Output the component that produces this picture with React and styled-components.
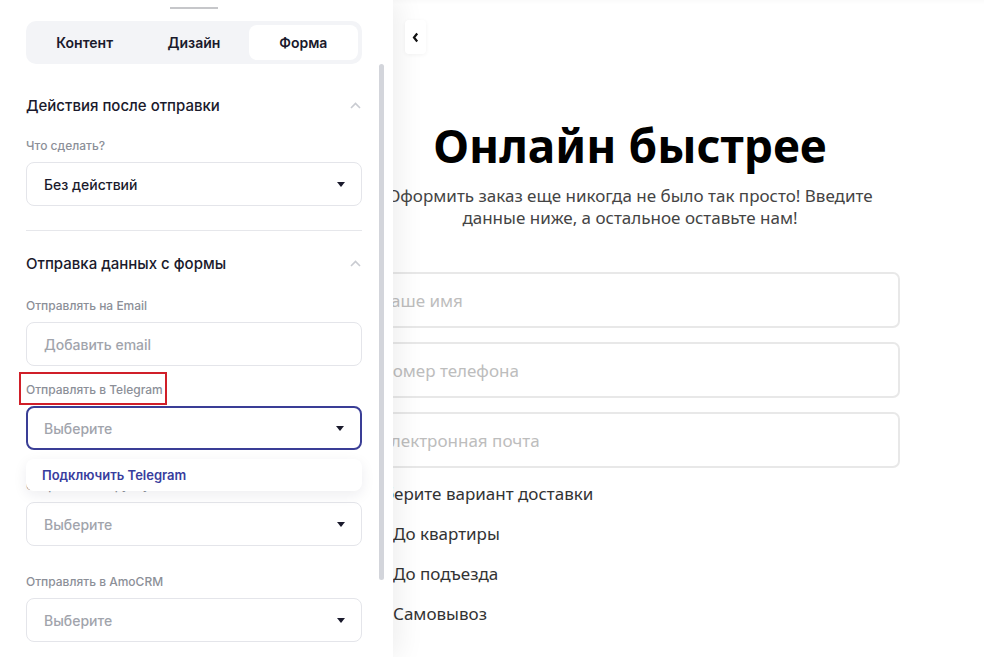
import React from 'react';
import styled, { createGlobalStyle } from 'styled-components';

const GlobalStyle = createGlobalStyle`
  html, body {
    height: 100%;
    margin: 0;
    background: #ffffff;
  }
  * {
    box-sizing: border-box;
  }
`;

const Page = styled.div`
  display: flex;
  height: 100vh;
  overflow: hidden;
`;

// ---------- left settings panel ----------

const Panel = styled.aside`
  position: relative;
  z-index: 2;
  flex-shrink: 0;
  width: 393px;
  display: flex;
  gap: 17px;
  padding: 0 9px 0 26px;
  background: #ffffff;
  box-shadow: 6px 0 26px rgba(0, 0, 0, 0.07);
  font-family: Inter, "Noto Sans", sans-serif;
  color: #1c1c2e;
`;

const PanelBody = styled.div`
  width: 336px;
  display: flex;
  flex-direction: column;
`;

const Scrollbar = styled.div`
  width: 5px;
  height: 516px;
  margin-top: 64px;
  border-radius: 3px;
  background: #d3d5db;
`;

const Handle = styled.div`
  align-self: center;
  width: 48px;
  height: 2px;
  margin-top: 7px;
  background: #c6c7ca;
`;

const Tabs = styled.div`
  display: grid;
  grid-template-columns: repeat(3, 1fr);
  margin-top: 12px;
  padding: 4px;
  height: 43px;
  border-radius: 10px;
  background: #f3f4f7;
`;

const Tab = styled.div`
  display: flex;
  align-items: center;
  justify-content: center;
  border-radius: 8px;
  font-size: 14px;
  font-weight: 600;
  color: #1a1a2c;
  background: ${({ active }) => (active ? '#ffffff' : 'transparent')};
`;

const SectionHeader = styled.div`
  display: flex;
  align-items: center;
  justify-content: space-between;
  height: 20px;
  margin-top: ${({ gap }) => gap}px;
  font-size: 15px;
  font-weight: 500;
  color: #1a1a2c;
`;

const Divider = styled.div`
  height: 1px;
  margin-top: 24px;
  background: #e6e7eb;
`;

const Field = styled.div`
  position: relative;
  display: flex;
  flex-direction: column;
  margin-top: ${({ gap }) => gap}px;
`;

const Label = styled.span`
  position: relative;
  align-self: flex-start;
  font-size: 12px;
  line-height: 16px;
  font-weight: 500;
  color: #8c8f98;
  margin-bottom: 8px;

  ${({ marked }) =>
    marked &&
    `
    &::after {
      content: '';
      position: absolute;
      top: -10px;
      bottom: -7px;
      left: -7px;
      right: -4px;
      border: 2px solid #d01f29;
    }
  `}
`;

const SelectBox = styled.div`
  display: flex;
  align-items: center;
  justify-content: space-between;
  height: 44px;
  padding: 0 16px 0 ${({ focused }) => (focused ? 16 : 17)}px;
  border-radius: 8px;
  border: ${({ focused }) => (focused ? '2px solid #3a3e96' : '1px solid #e4e5ea')};
  background: #ffffff;
  font-size: 14px;
  font-weight: 500;
  color: ${({ empty }) => (empty ? '#a1a4ac' : '#1a1a2c')};
`;

const Menu = styled.div`
  position: absolute;
  top: calc(100% + 9px);
  left: 0;
  right: 0;
  z-index: 3;
  height: 32px;
  display: flex;
  align-items: center;
  padding-left: 16px;
  border-radius: 8px;
  background: #ffffff;
  box-shadow: 0 4px 14px rgba(30, 30, 60, 0.08);
  font-size: 13px;
  font-weight: 600;
  color: #383d9e;
`;

const Caret = () => (
  <svg width="8" height="5" viewBox="0 0 8 5">
    <path d="M0 0h8L4 5z" fill="#1a1a2c" />
  </svg>
);

const ChevronUp = () => (
  <svg width="11" height="7" viewBox="0 0 11 7" style={{ marginRight: 1 }}>
    <path d="M1 6l4.5-4.5L10 6" stroke="#c9cbd1" strokeWidth="1.6" fill="none" />
  </svg>
);

// ---------- preview ----------

const Preview = styled.main`
  position: relative;
  flex: 1;
  display: flex;
  flex-direction: column;
  padding: 20px 0 0 12px;
  font-family: "Noto Sans", "Open Sans", sans-serif;
  box-shadow: inset 0 6px 6px -6px rgba(0, 0, 0, 0.04);
`;

const BackButton = styled.button`
  position: relative;
  z-index: 3;
  width: 21px;
  height: 34px;
  padding: 0;
  display: flex;
  align-items: center;
  justify-content: center;
  border: none;
  border-radius: 4px;
  background: #ffffff;
  box-shadow: 0 1px 4px rgba(0, 0, 0, 0.05);
`;

const Content = styled.div`
  width: 540px;
  margin: 62px 0 0 -45px;
  display: flex;
  flex-direction: column;
`;

const Title = styled.h1`
  margin: 0;
  text-align: center;
  font-size: 46px;
  line-height: 58px;
  font-weight: 700;
  color: #000000;
`;

const Subtitle = styled.p`
  margin: 11px 0 0;
  text-align: center;
  font-size: 17px;
  line-height: 22px;
  color: #444444;
`;

const Inputs = styled.div`
  display: flex;
  flex-direction: column;
  gap: 14px;
  margin-top: 43px;
`;

const TextInput = styled.div`
  height: 56px;
  display: flex;
  align-items: center;
  padding-left: 18px;
  border: 2px solid #e8e8e8;
  border-radius: 7px;
  font-size: 17px;
  color: #bdbdbd;
`;

const RadioGroup = styled.div`
  display: flex;
  flex-direction: column;
  gap: 16px;
  margin-top: 14px;
  font-size: 17px;
  line-height: 24px;
  color: #333333;
`;

const Option = styled.label`
  display: flex;
  align-items: center;
  gap: 13px;
`;

const Radio = styled.span`
  width: 20px;
  height: 20px;
  border-radius: 50%;
  border: 2px solid #cccccc;
`;

const App = () => {
  return (
    <>
      <GlobalStyle />
      <Page>
        <Panel>
          <PanelBody>
            <Handle />
            <Tabs>
              <Tab>Контент</Tab>
              <Tab>Дизайн</Tab>
              <Tab active>Форма</Tab>
            </Tabs>

            <SectionHeader gap={31}>
              Действия после отправки
              <ChevronUp />
            </SectionHeader>
            <Field gap={23}>
              <Label>Что сделать?</Label>
              <SelectBox>
                Без действий
                <Caret />
              </SelectBox>
            </Field>

            <Divider />

            <SectionHeader gap={22}>
              Отправка данных с формы
              <ChevronUp />
            </SectionHeader>
            <Field gap={25}>
              <Label>Отправлять на Email</Label>
              <SelectBox empty>Добавить email</SelectBox>
            </Field>
            <Field gap={16}>
              <Label marked>Отправлять в Telegram</Label>
              <SelectBox focused empty>
                Выберите
                <Caret />
              </SelectBox>
              <Menu>Подключить Telegram</Menu>
            </Field>
            <Field gap={28}>
              <Label>Отправлять в группу</Label>
              <SelectBox empty>
                Выберите
                <Caret />
              </SelectBox>
            </Field>
            <Field gap={28}>
              <Label>Отправлять в AmoCRM</Label>
              <SelectBox empty>
                Выберите
                <Caret />
              </SelectBox>
            </Field>
          </PanelBody>
          <Scrollbar />
        </Panel>

        <Preview>
          <BackButton>
            <svg width="7" height="11" viewBox="0 0 7 11">
              <path d="M5.2 1.5L2 5.5l3.2 4" stroke="#111" strokeWidth="2.2" fill="none" />
            </svg>
          </BackButton>
          <Content>
            <Title>Онлайн быстрее</Title>
            <Subtitle>
              Оформить заказ еще никогда не было так просто! Введите
              <br />
              данные ниже, а остальное оставьте нам!
            </Subtitle>
            <Inputs>
              <TextInput>Ваше имя</TextInput>
              <TextInput>Номер телефона</TextInput>
              <TextInput>Электронная почта</TextInput>
            </Inputs>
            <RadioGroup>
              <span>Выберите вариант доставки</span>
              <Option>
                <Radio />
                До квартиры
              </Option>
              <Option>
                <Radio />
                До подъезда
              </Option>
              <Option>
                <Radio />
                Самовывоз
              </Option>
            </RadioGroup>
          </Content>
        </Preview>
      </Page>
    </>
  );
};

export default App;
